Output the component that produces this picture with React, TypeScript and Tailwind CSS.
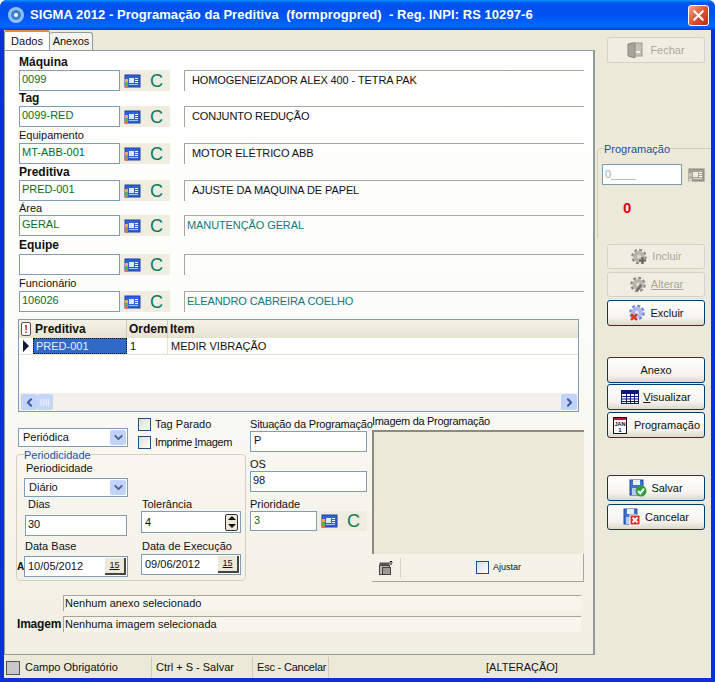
import { ReactNode } from "react"
import { ChevronDown, ChevronLeft, ChevronRight, X } from "lucide-react"

function LookupIcon({ gray = false }: { gray?: boolean }) {
  return (
    <svg width="17" height="16" viewBox="0 0 17 16" className="shrink-0">
      <rect x="1" y="2" width="15" height="12" fill={gray ? "#a5a396" : "#2f62d8"} stroke={gray ? "#85837a" : "#20409c"} />
      <rect x="5" y="5" width="5" height="5" fill={gray ? "#efeee6" : "#d7eaff"} />
      <rect x="11" y="5" width="3" height="1" fill="#fff" />
      <rect x="11" y="7" width="3" height="1" fill="#fff" />
      <rect x="11" y="9" width="3" height="1" fill="#fff" />
      <rect x="5" y="11" width="9" height="1" fill={gray ? "#d8d6cb" : "#9cc4ff"} />
      <rect x="1" y="6" width="3" height="3" fill={gray ? "#c9c7ba" : "#e9b04a"} />
      <rect x="1" y="9" width="3" height="3" fill={gray ? "#b7b5a9" : "#5fae4e"} />
      <rect x="1" y="12" width="3" height="3" fill={gray ? "#d8d6cb" : "#e2704a"} />
    </svg>
  )
}

function GearIcon({ mark }: { mark: "plus" | "edit" | "x" }) {
  const color = mark === "x" ? "#7083d8" : "#8f8f88"
  return (
    <svg width="18" height="18" viewBox="0 0 18 18" className="shrink-0">
      <circle cx="9" cy="8.5" r="6.6" fill="none" stroke={color} strokeWidth="2.4" strokeDasharray="3 2.18" />
      <circle cx="9" cy="8.5" r="5.6" fill={mark === "x" ? "#aab7ec" : "#b4b4ac"} />
      <circle cx="9" cy="8.5" r="2" fill={mark === "x" ? "#dfe5fa" : "#d9d9d2"} />
      {mark === "plus" && <path d="M9 12.5h7M12.5 9v7" stroke="#66665f" strokeWidth="2" />}
      {mark === "edit" && <path d="M7 14l4-6 2 1.5-4 6z" fill="#6f6f68" />}
      {mark === "x" && <path d="M3 10l6 6M9 10l-6 6" stroke="#d8381e" strokeWidth="2.4" />}
    </svg>
  )
}

function DoorIcon() {
  return (
    <svg width="16" height="16" viewBox="0 0 16 16" className="shrink-0">
      <rect x="4" y="1" width="11" height="13" fill="#c4c3bb" stroke="#9a9a92" />
      <path d="M1 2l7 -1v15l-7-2z" fill="#a5a59d" stroke="#8a8a82" />
      <rect x="9" y="9" width="4" height="2" fill="#efeee6" />
    </svg>
  )
}

function TableIcon() {
  return (
    <svg width="18" height="14" viewBox="0 0 18 14" className="shrink-0">
      <rect x="0.5" y="0.5" width="17" height="13" fill="#fff" stroke="#0a1a7a" />
      <rect x="1" y="1" width="16" height="3" fill="#0a1a7a" />
      <path d="M1 6.5h16M1 9h16M1 11.5h16M5.5 4v9M9.5 4v9M13.5 4v9" stroke="#0a1a7a" />
    </svg>
  )
}

function CalendarIcon() {
  return (
    <svg width="16" height="20" viewBox="0 0 16 20" className="shrink-0">
      <rect x="1.5" y="2.5" width="13" height="16" fill="#fff" stroke="#111" />
      <rect x="2" y="3" width="12" height="2" fill="#c8102e" />
      <text x="8" y="11" textAnchor="middle" fontSize="5.5" fontWeight="700" fontFamily="Liberation Sans" fill="#111">JAN</text>
      <text x="8" y="17" textAnchor="middle" fontSize="6" fontWeight="700" fontFamily="Liberation Sans" fill="#111">1</text>
    </svg>
  )
}

function DiskIcon({ kind }: { kind: "ok" | "no" }) {
  return (
    <svg width="18" height="18" viewBox="0 0 18 18" className="shrink-0">
      <rect x="1" y="1" width="13" height="15" fill="#3f74d6" stroke="#234a9c" />
      <rect x="4" y="1" width="7" height="5" fill="#e8f0ff" />
      <rect x="3" y="9" width="9" height="7" fill="#b9cdf2" />
      {kind === "ok" ? (
        <>
          <circle cx="12" cy="12" r="5.5" fill="#2f9e3a" />
          <path d="M9 12l2.2 2.4L15 9.6" fill="none" stroke="#fff" strokeWidth="2" />
        </>
      ) : (
        <>
          <rect x="7" y="7" width="10" height="10" fill="#d92b1e" stroke="#fff" />
          <path d="M9.5 9.5l5 5M14.5 9.5l-5 5" stroke="#fff" strokeWidth="2" />
        </>
      )}
    </svg>
  )
}

function Label({ children, bold = false, cls = "" }: { children: ReactNode; bold?: boolean; cls?: string }) {
  return (
    <div className={`flex items-center whitespace-nowrap leading-none text-[#111] ${bold ? "text-[12px] font-bold" : "text-[11px]"} ${cls}`}>
      {children}
    </div>
  )
}

function Field({ value, cls = "", green = false }: { value?: string; cls?: string; green?: boolean }) {
  return (
    <div className={`flex items-center border border-[#7f9db9] bg-white pb-[2px] pl-[2px] text-[11px] ${green ? "text-[#0b6b1d]" : "text-[#111]"} ${cls}`}>
      {value}
    </div>
  )
}

function LookupTail() {
  return (
    <div className="flex h-full w-[50px] items-center bg-[#efece0] pl-[4px]">
      <LookupIcon />
      <span className="ml-[9px] text-[18px] leading-none text-[#0d7a5f]">C</span>
    </div>
  )
}

function LookupRow(props: { label: string; bold?: boolean; labelCls: string; code: string; text: string; teal?: boolean }) {
  return (
    <div>
      <Label bold={props.bold} cls={`pl-[1px] ${props.bold ? "pb-[1px]" : ""} ${props.labelCls}`}>{props.label}</Label>
      <div className="flex h-[21px] items-stretch pl-[1px]">
        <Field value={props.code} green cls="w-[101px]" />
        <LookupTail />
        <div
          className={`ml-[14px] flex w-[400px] items-center border-l border-t border-[#a7a69c] pb-[2px] text-[11px] tracking-[-0.1px] ${
            props.teal ? "pl-[2px] text-[#0d7a7a]" : "pl-[7px] text-[#111]"
          }`}
        >
          {props.text}
        </div>
      </div>
    </div>
  )
}

function Check({ label, cls = "text-[11px]" }: { label: ReactNode; cls?: string }) {
  return (
    <div className={`flex items-center gap-[4px] text-[#111] ${cls}`}>
      <span className="size-[13px] shrink-0 border border-[#1c5180] bg-[linear-gradient(135deg,#dcdcd7,#ffffff)]" />
      {label}
    </div>
  )
}

function Combo({ value, cls = "" }: { value: string; cls?: string }) {
  return (
    <div className={`flex h-[19px] items-center justify-between border border-[#7f9db9] bg-white text-[11px] text-[#111] ${cls}`}>
      <span className="pl-[4px]">{value}</span>
      <span className="mr-[1px] flex h-[15px] w-[16px] items-center justify-center rounded-[2px] bg-[#c1d3fb]">
        <ChevronDown size={13} strokeWidth={3.5} className="text-[#4d6185]" />
      </span>
    </div>
  )
}

function DateField({ value, anexo = false }: { value: string; anexo?: boolean }) {
  return (
    <div className="relative flex h-[21px] items-center justify-between border border-[#7f9db9] bg-white pl-[3px] text-[11px] text-[#111]">
      {anexo && <span className="absolute -left-[8px] text-[10px] font-bold">A</span>}
      {value}
      <span className="mr-[1px] flex h-[17px] w-[21px] items-center justify-center border-b-2 border-r-2 border-[#444] bg-[#ece9d8] text-[9px] leading-none underline">
        15
      </span>
    </div>
  )
}

function XpButton({ children, disabled = false, cls = "", h = "h-[26px]" }: { children: ReactNode; disabled?: boolean; cls?: string; h?: string }) {
  return (
    <div
      className={`ml-[12px] flex w-[98px] items-center justify-center gap-[4px] rounded-[3px] border text-[11px] ${h} ${cls} ${
        disabled
          ? "border-[#d5d3c5] bg-[#f0eee2] text-[#aca899]"
          : "border-[#003c74] bg-[linear-gradient(#ffffff,#f4f3ee_70%,#dcd8cb)] text-[#111]"
      }`}
    >
      {children}
    </div>
  )
}

export default function App() {
  return (
    <div className="flex h-[682px] w-[715px] flex-col overflow-hidden rounded-t-[7px] bg-[#0831d9] font-['Liberation_Sans',sans-serif]">
      <div className="flex h-[30px] shrink-0 items-center bg-[linear-gradient(#0997ff,#0053ee_10%,#0050ee_45%,#0066ff_88%,#003dd7)] pl-[7px] pr-[6px]">
        <svg width="18" height="18" viewBox="0 0 18 18" className="shrink-0">
          <circle cx="9" cy="9" r="8" fill="#8fc0ee" />
          <circle cx="9" cy="9" r="5" fill="#3c7fd0" />
          <circle cx="9" cy="9" r="2" fill="#fff" />
        </svg>
        <span className="ml-[5px] whitespace-pre text-[13px] font-bold tracking-[0.06px] text-white">
          SIGMA 2012 - Programação da Preditiva  (formprogpred)  - Reg. INPI: RS 10297-6
        </span>
        <span className="ml-auto flex h-[21px] w-[21px] items-center justify-center rounded-[3px] border border-white bg-[linear-gradient(135deg,#f2a48c,#d9502e_55%,#b8321a)]">
          <X size={17} strokeWidth={3} className="text-white" />
        </span>
      </div>

      <div className="mx-[4px] flex h-[627px] bg-[#ece9d8]">
        <div className="flex w-[591px] flex-col">
          <div className="flex h-[20px] items-end text-[11px] text-[#111]">
            <div className="z-10 flex h-[20px] w-[46px] items-center justify-center rounded-t-[3px] border-x border-t-2 border-x-[#919b9c] border-t-[#e68b2c] bg-white">
              Dados
            </div>
            <div className="flex h-[18px] w-[43px] items-center justify-center rounded-t-[3px] border-r border-t border-[#919b9c] bg-[#f4f3ec]">
              Anexos
            </div>
          </div>

          <div className="h-[605px] border border-r-2 border-[#919b9c] bg-[linear-gradient(#ffffff,#fcfcfa_45%,#f1efe2)] pl-[13px] pt-[4px]">
            <LookupRow label="Máquina" bold labelCls="h-[15px]" code="0099" text="HOMOGENEIZADOR ALEX 400 - TETRA PAK" />
            <LookupRow label="Tag" bold labelCls="h-[15px]" code="0099-RED" text="CONJUNTO REDUÇÃO" />
            <LookupRow label="Equipamento" labelCls="h-[16px]" code="MT-ABB-001" text="MOTOR ELÉTRICO ABB" />
            <LookupRow label="Preditiva" bold labelCls="h-[16px]" code="PRED-001" text="AJUSTE DA MAQUINA DE PAPEL" />
            <LookupRow label="Área" labelCls="h-[14px]" code="GERAL" text="MANUTENÇÃO GERAL" teal />
            <LookupRow label="Equipe" bold labelCls="h-[18px]" code="" text="" />
            <LookupRow label="Funcionário" labelCls="h-[16px]" code="106026" text="ELEANDRO CABREIRA COELHO" teal />

            <div className="mt-[7px] flex h-[93px] w-[561px] flex-col border border-[#7f9db9] bg-white text-[11px] text-[#111]">
              <div className="flex h-[18px] items-stretch bg-[linear-gradient(#f5f3e8,#e6e3d2)] text-[12px] font-bold">
                <div className="flex w-[14px] items-center justify-center">
                  <span className="flex h-[14px] w-[10px] items-center justify-center rounded-[2px] border border-[#555] bg-white text-[11px] leading-none text-[#c8102e]">!</span>
                </div>
                <div className="flex w-[94px] items-center border-r border-[#cfccbb] pl-[2px]">Preditiva</div>
                <div className="flex w-[41px] items-center border-r border-[#cfccbb] pl-[2px]">Ordem</div>
                <div className="flex flex-1 items-center pl-[2px]">Item</div>
              </div>
              <div className="flex h-[17px] items-stretch border-b border-[#e4e2d6]">
                <div className="flex w-[14px] items-center justify-center">
                  <span className="h-0 w-0 border-y-[6px] border-l-[6px] border-y-transparent border-l-[#0a1a3a]" />
                </div>
                <div className="flex w-[94px] items-center border border-dotted border-[#111] bg-[#316ac5] pl-[2px] text-[#e8eeff]">PRED-001</div>
                <div className="flex w-[41px] items-center border-r border-[#e4e2d6] pl-[3px]">1</div>
                <div className="flex flex-1 items-center pl-[3px]">MEDIR VIBRAÇÃO</div>
              </div>
              <div className="flex-1" />
              <div className="flex h-[18px] items-center justify-between bg-[#f3f1ec] pl-[2px] pr-[1px]">
                <div className="flex items-center">
                  <span className="flex h-[16px] w-[16px] items-center justify-center rounded-[2px] bg-[#c1d3fb]">
                    <ChevronLeft size={13} strokeWidth={3.5} className="text-[#3d5a9c]" />
                  </span>
                  <span className="flex h-[16px] w-[16px] items-center justify-center rounded-[2px] bg-[#c7d6f8] text-[8px] leading-none tracking-[0.5px] text-white">||||</span>
                </div>
                <span className="flex h-[16px] w-[16px] items-center justify-center rounded-[2px] bg-[#c1d3fb]">
                  <ChevronRight size={13} strokeWidth={3.5} className="text-[#3d5a9c]" />
                </span>
              </div>
            </div>

            <div className="flex h-[170px]">
              <div className="-ml-[2px] w-[230px] shrink-0">
                <div className="flex h-[42px]">
                  <Combo value="Periódica" cls="ml-[2px] mt-[16px] w-[110px]" />
                  <div className="ml-[10px] mt-[6px]">
                    <Check label="Tag Parado" cls="h-[13px] text-[11px]" />
                    <Check label={<span>Imprime <span className="underline">I</span>magem</span>} cls="mt-[5px] h-[13px] text-[11px] tracking-[-0.4px]" />
                  </div>
                </div>
                <div className="relative flex h-[127px] rounded-[4px] border border-[#d0d0bf] pl-[7px] pt-[6px]">
                  <span className="absolute -top-[6px] left-[7px] bg-[#f7f7f2] text-[11px] leading-[13px] text-[#1c4fa0]">Periodicidade</span>
                  <div className="w-[104px]">
                    <Label cls="h-[14px] pl-[2px]">Periodicidade</Label>
                    <Combo value="Diário" cls="mt-[3px]" />
                    <Label cls="h-[14px] pl-[4px]">Dias</Label>
                    <Field value="30" cls="mt-[4px] ml-[1px] h-[21px] w-[102px]" />
                    <Label cls="mt-[3px] h-[14px] pl-[1px]">Data Base</Label>
                    <div className="mt-[3px]"><DateField value="10/05/2012" anexo /></div>
                  </div>
                  <div className="ml-[13px] w-[100px] pt-[36px]">
                    <Label cls="h-[14px] pl-[1px]">Tolerância</Label>
                    <div className="flex h-[22px] items-center justify-between border border-[#7f9db9] bg-white pl-[3px] text-[11px] text-[#111]">
                      4
                      <span className="mr-[2px] flex h-[17px] w-[13px] flex-col items-center justify-around rounded-[2px] border border-[#333] bg-[#ece9d8]">
                        <span className="h-0 w-0 border-x-[4px] border-b-[4px] border-x-transparent border-b-[#111]" />
                        <span className="h-0 w-0 border-x-[4px] border-t-[4px] border-x-transparent border-t-[#111]" />
                      </span>
                    </div>
                    <Label cls="mt-[6px] h-[14px] pl-[1px]">Data de Execução</Label>
                    <div className="mt-[1px]"><DateField value="09/06/2012" /></div>
                  </div>
                </div>
              </div>

              <div className="ml-[4px] w-[117px] shrink-0 pt-[5px]">
                <Label cls="h-[14px] tracking-[-0.2px]">Situação da Programação</Label>
                <Field value="P" cls="h-[21px] pl-[3px]" />
                <Label cls="mt-[6px] h-[13px]">OS</Label>
                <Field value="98" cls="h-[21px]" />
                <Label cls="mt-[5px] h-[14px]">Prioridade</Label>
                <div className="flex h-[20px]">
                  <Field value="3" green cls="w-[67px] pl-[3px]" />
                  <LookupTail />
                </div>
              </div>

              <div className="ml-[5px] w-[212px] shrink-0 pt-[2px]">
                <Label cls="h-[14px] tracking-[-0.3px]">Imagem da Programação</Label>
                <div className="mt-[2px] h-[124px] border-l-2 border-t-2 border-[#8c8a7c] bg-[#ece9d8]" />
                <div className="flex h-[28px] items-center border-b border-r border-[#a7a69c]">
                  <span className="flex h-[20px] w-[29px] items-center justify-center border-r border-[#d5d3c5]">
                    <svg width="16" height="16" viewBox="0 0 16 16">
                      <rect x="1.5" y="2.5" width="10" height="3" fill="#555" />
                      <rect x="1.5" y="5.5" width="10" height="9" fill="#b8b8b0" stroke="#444" />
                      <rect x="4.5" y="7.5" width="8" height="7" fill="#9a9a92" stroke="#444" />
                      <path d="M13 1v4M11.5 2.5L13 1l1.5 1.5" fill="none" stroke="#111" />
                    </svg>
                  </span>
                  <Check label="Ajustar" cls="ml-[75px] text-[9px]" />
                </div>
              </div>
            </div>

            <div className="mt-[13px] flex h-[16px] items-stretch">
              <div className="w-[45px]" />
              <div className="flex w-[518px] items-center border-l border-t border-[#a7a69c] bg-[#f6f5ee] pl-[1px] text-[11px] text-[#111]">Nenhum anexo selecionado</div>
            </div>
            <div className="mt-[5px] flex h-[16px] items-stretch">
              <div className="-ml-[1px] flex w-[46px] items-center text-[12px] font-bold tracking-[-0.2px] text-[#111]">Imagem</div>
              <div className="flex w-[518px] items-center border-l border-t border-[#a7a69c] bg-[#f6f5ee] pl-[1px] text-[11px] text-[#111]">Nenhuma imagem selecionada</div>
            </div>
          </div>
        </div>

        <div className="w-[116px] pt-[7px]">
          <XpButton disabled><DoorIcon /><span className="ml-[3px]">Fechar</span></XpButton>

          <div className="relative ml-[2px] mt-[85px] h-[90px] rounded-tl-[4px] border-l border-t border-[#d0d0bf]">
            <span className="absolute -top-[6px] left-[6px] bg-[#ece9d8] text-[11px] leading-[13px] text-[#1c4fa0]">Programação</span>
            <div className="ml-[4px] mt-[15px] flex items-center">
              <div className="flex h-[21px] w-[80px] items-center border border-[#7f9db9] bg-white pl-[2px] text-[11px] text-[#aca899]">0____</div>
              <span className="ml-[6px]"><LookupIcon gray /></span>
            </div>
            <div className="ml-[25px] mt-[15px] text-[15px] font-bold leading-none text-[#e0001a]">0</div>
          </div>

          <XpButton disabled h="h-[25px]" cls="mt-[6px]"><GearIcon mark="plus" />Incluir</XpButton>
          <XpButton disabled h="h-[25px]" cls="mt-[3px]"><GearIcon mark="edit" /><span className="underline">Alterar</span></XpButton>
          <XpButton cls="mt-[3px]"><GearIcon mark="x" />Excluir</XpButton>
          <XpButton cls="mt-[31px]">Anexo</XpButton>
          <XpButton cls="mt-[1px]"><TableIcon /><span><span className="underline">V</span>isualizar</span></XpButton>
          <XpButton cls="mt-[2px]"><CalendarIcon /><span className="ml-[2px]">Programação</span></XpButton>
          <XpButton cls="mt-[37px]"><DiskIcon kind="ok" />Salvar</XpButton>
          <XpButton cls="mt-[3px]"><DiskIcon kind="no" />Cancelar</XpButton>
        </div>
      </div>

      <div className="mx-[4px] flex h-[21px] items-center whitespace-nowrap bg-[#ece9d8] text-[11px] text-[#111]">
        <div className="flex h-full w-[148px] items-center border-r border-[#cfccbb] pl-[2px]">
          <span className="size-[14px] border border-[#555] bg-[#c8c8c8]" />
          <span className="ml-[5px]">Campo Obrigatório</span>
        </div>
        <div className="flex h-full w-[101px] items-center border-r border-[#cfccbb] pl-[4px]">Ctrl + S - Salvar</div>
        <div className="flex h-full w-[76px] items-center border-r border-[#cfccbb] pl-[4px] tracking-[-0.2px]">Esc - Cancelar</div>
        <div className="pl-[157px]">[ALTERAÇÃO]</div>
      </div>
    </div>
  )
}
